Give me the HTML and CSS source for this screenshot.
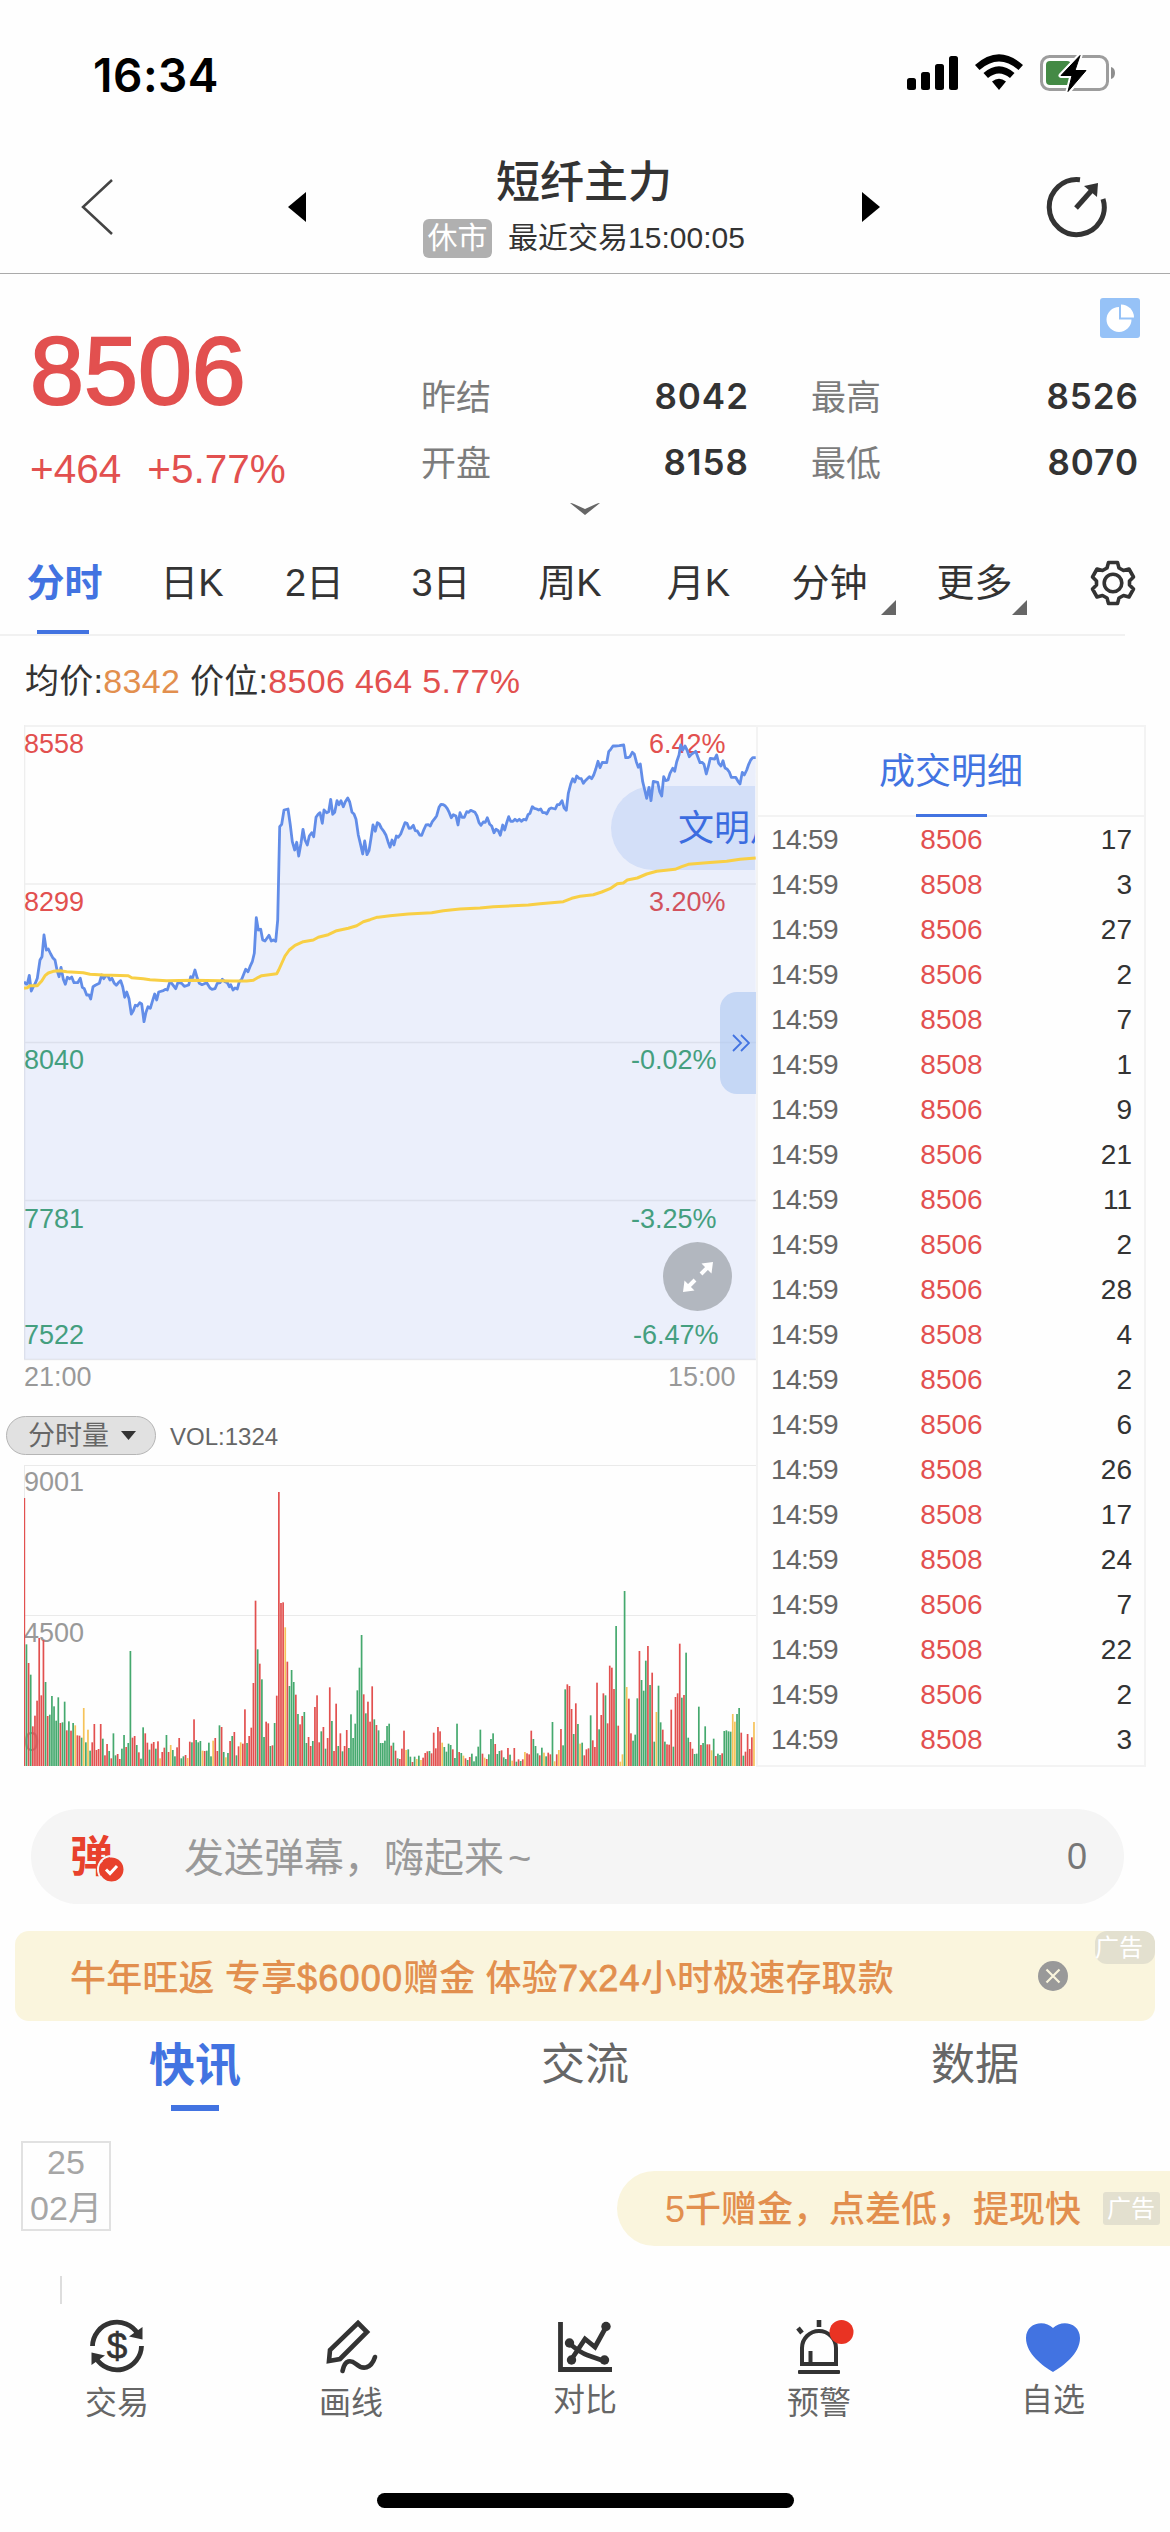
FILE: index.html
```
<!DOCTYPE html>
<html lang="zh-CN">
<head>
    <meta charset="UTF-8" />
    <title>短纤主力</title>
    <link rel="stylesheet" href="styles.css">
</head>
<body>
    <div id="wrap">
        <div class="status">
            <span class="time">16:34</span>
            <svg class="signal" width="212" height="42" viewBox="0 0 212 42">
                <rect x="1" y="25" width="9" height="12" rx="2.5"/>
                <rect x="15" y="19" width="9" height="18" rx="2.5"/>
                <rect x="29" y="11" width="9" height="26" rx="2.5"/>
                <rect x="43" y="3" width="9" height="34" rx="2.5"/>
                <path d="M69 12Q93 -9.500 117 12L112.500 17Q93 0 73.500 17Z"/>
                <path d="M77.500 20Q93 6.500 108.500 20L104 25Q93 16 82 25Z"/>
                <path d="M86 28.500Q93 23 100 28.500L93 37Z"/>
                <rect x="135.500" y="3.500" width="66" height="33" rx="8" fill="none" stroke="#9d9d9d" stroke-width="3"/>
                <rect x="140" y="8" width="25" height="24" rx="4" fill="#448a45"/>
                <path d="M205 14q4 1 4 6t-4 6z" fill="#8e8e8e"/>
                <path d="M174 2.500L155 22.500H166L162 38.500L180 17.500H169Z" stroke="#fff" stroke-width="5" stroke-linejoin="round"/>
                <path d="M174 2.500L155 22.500H166L162 38.500L180 17.500H169Z" stroke="#000" stroke-width="1" stroke-linejoin="round"/>
            </svg>
        </div>
        <header>
            <svg class="back" width="34" height="58" viewBox="0 0 34 58"><path d="M32 2L3 29L32 56"/></svg>
            <svg class="arrow" width="18" height="30"><path d="M18 0V30L0 15Z"/></svg>
            <div class="title">
                <h1>短纤主力</h1>
                <p><em>休市</em>最近交易15:00:05</p>
            </div>
            <svg class="arrow" width="18" height="30"><path d="M0 0V30L18 15Z"/></svg>
            <svg class="share" width="62" height="62" viewBox="0 0 62 62">
                <path d="M34 3.800A27.500 27.500 0 1 0 57 23" fill="none" stroke="#333" stroke-width="5"/>
                <path d="M30 32L46 14" stroke="#333" stroke-width="5"/>
                <path d="M38 10L52 7L51 21Z" fill="#333"/>
            </svg>
        </header>

        <section class="quote">
            <div class="price">
                <strong>8506</strong>
                <p><span>+464</span><span>+5.77%</span></p>
            </div>
            <dl>
                <dt>昨结</dt><dd>8042</dd><dt>最高</dt><dd>8526</dd>
                <dt>开盘</dt><dd>8158</dd><dt>最低</dt><dd>8070</dd>
            </dl>
            <svg class="pie" width="40" height="40" viewBox="0 0 40 40">
                <rect width="40" height="40" rx="3" fill="#96c2f7"/>
                <path d="M19 9A12.500 12.500 0 1 0 31.500 21.500H19Z" fill="#fff"/>
                <path d="M21 6.500A13 13 0 0 1 34 19.500H21Z" fill="#fff"/>
            </svg>
            <svg class="more" width="30" height="12" viewBox="0 0 30 12"><path d="M0 0Q2 0 4 1L15 6L26 1Q28 0 30 0L15 12Z" fill="#666"/></svg>
        </section>

        <ul class="periods">
            <li class="active">分时</li>
            <li>日K</li>
            <li>2日</li>
            <li>3日</li>
            <li>周K</li>
            <li>月K</li>
            <li class="drop">分钟</li>
            <li class="drop">更多</li>
            <li>
                <svg width="46" height="46" viewBox="0 0 46 46" fill="none" stroke="#333" stroke-width="3.600" stroke-linejoin="round">
                    <path d="M18.500 2.500H27.500L29 8L33.500 10.500L39 9L43.500 17L39.500 21V25L43.500 29L39 37L33.500 35.500L29 38L27.500 43.500H18.500L17 38L12.500 35.500L7 37L2.500 29L6.500 25V21L2.500 17L7 9L12.500 10.500L17 8Z"/>
                    <circle cx="23" cy="23" r="8.800"/>
                </svg>
            </li>
        </ul>

        <p class="info">均价:<i class="orange">8342</i> 价位:<i>8506 464 5.77%</i></p>

        <div class="main">
            <div class="charts">
                <div class="kline">
                    <div class="danmu">文明用语</div>
                    <svg id="trend" width="732" height="680" viewBox="0 0 732 680">
                        <g class="grid">
                            <path d="M0 1H732M0 159H732M0 317.500H732M0 475.500H732M0 634.500H732M.5 0V635"/>
                        </g>
                        <g class="up">
                            <text x="0" y="28">8558</text><text x="0" y="186">8299</text>
                            <text x="625" y="28">6.42%</text><text x="625" y="186">3.20%</text>
                        </g>
                        <g class="down">
                            <text x="0" y="344">8040</text><text x="0" y="503">7781</text><text x="0" y="619">7522</text>
                            <text x="607" y="344">-0.02%</text><text x="607" y="503">-3.25%</text><text x="609" y="619">-6.47%</text>
                        </g>
                        <g class="axis">
                            <text x="0" y="661">21:00</text><text x="644" y="661">15:00</text>
                        </g>
                    </svg>
                    <div class="fold">
                        <svg width="18" height="18" viewBox="0 0 18 18"><path d="M1 1L9 9L1 17M9 1L17 9L9 17"/></svg>
                    </div>
                    <div class="full">
                        <svg width="34" height="34" viewBox="0 0 34 34">
                            <path d="M20 14L27 7M14 20L7 27" stroke="#fff" stroke-width="4"/>
                            <path d="M20.500 3.500L32 2L30.500 13.500ZM3.500 20.500L2 32L13.500 30.500Z" fill="#fff"/>
                        </svg>
                    </div>
                </div>
                <div class="tool">
                    <span class="select">分时量<svg width="15" height="10"><path d="M0 0H15L7.500 9Z" fill="#333"/></svg></span>
                    <span class="vol">VOL:1324</span>
                </div>
                <svg id="volume" width="732" height="302" viewBox="0 0 732 302">
                    <path class="line" d="M0 .5H732M0 150.500H732M.5 0V301"/>
                    <g class="axis">
                        <text x="0" y="26">9001</text><text x="0" y="177">4500</text><text x="0" y="286">0</text>
                    </g>
                </svg>
            </div>
            <div class="detail">
                <h2>成交明细</h2>
                <ul id="list"></ul>
            </div>
        </div>

        <div class="send">
            <div class="logo">弹<svg width="25" height="25" viewBox="0 0 25 25"><circle cx="12.500" cy="12.500" r="12" fill="#e8412c"/><path d="M7 12.500L11 16.500L18 9" fill="none" stroke="#fff" stroke-width="3"/></svg></div>
            <span class="hint">发送弹幕，嗨起来<i>~</i></span>
            <span class="count">0</span>
        </div>

        <div class="ad">
            <span>牛年旺返 专享<b>$6000</b>赠金 体验<b>7x24</b>小时极速存取款</span>
            <svg width="30" height="30" viewBox="0 0 30 30"><circle cx="15" cy="15" r="15" fill="#999"/><path d="M8.500 8.500L21.500 21.500M21.500 8.500L8.500 21.500" stroke="#faf5dd" stroke-width="2.200"/></svg>
            <em>广告</em>
        </div>

        <nav class="tabs">
            <a class="active">快讯</a>
            <a>交流</a>
            <a>数据</a>
        </nav>

        <div class="news">
            <div class="date"><span>25</span><span>02月</span></div>
            <div class="gift"><span>5千赠金，点差低，提现快</span><em>广告</em></div>
        </div>
        <div class="stem"></div>

        <footer>
            <a>
                <svg width="56" height="56" viewBox="0 0 56 56">
                    <path d="M3.500 28A24.500 24.500 0 0 1 49 16M52.500 28A24.500 24.500 0 0 1 7 40" fill="none" stroke="#333" stroke-width="4.800"/>
                    <path d="M40 18.500L53.500 9V21.500ZM16 37.500L2.500 47V34.500Z" fill="#333"/>
                    <text x="28" y="41" class="dollar">$</text>
                </svg>
                交易
            </a>
            <a>
                <svg width="56" height="56" viewBox="0 0 56 56" fill="none" stroke="#333" stroke-width="4.600">
                    <path d="M35 5L44 14L17 41L6 43L7 32Z"/>
                    <path d="M19.500 53C22 41 28 42 33 46C40 52 48 51 52 39" stroke-linecap="round"/>
                </svg>
                画线
            </a>
            <a class="lift">
                <svg width="56" height="56" viewBox="0 0 56 56">
                    <path d="M3.500 4V51.500H55" fill="none" stroke="#333" stroke-width="4.800"/>
                    <path d="M14 42L28 21L38 29L49 9M13 26Q24 35 30 37L47 43" fill="none" stroke="#333" stroke-width="4.800"/>
                    <g fill="#333"><circle cx="49" cy="8.500" r="4.700"/><circle cx="12.500" cy="25" r="4.700"/><circle cx="14.500" cy="42" r="4.700"/><circle cx="47.500" cy="42" r="4.700"/></g>
                </svg>
                对比
            </a>
            <a>
                <svg width="56" height="56" viewBox="0 0 56 56" overflow="visible">
                    <path d="M11 46V30A17 17 0 0 1 45 30V46Z" fill="none" stroke="#333" stroke-width="4"/>
                    <path d="M19.500 46V33" stroke="#333" stroke-width="4"/>
                    <path d="M28 2V9M7 10L11 15" stroke="#333" stroke-width="4.600"/>
                    <rect x="7" y="52" width="42" height="4" rx="1" fill="#333"/>
                    <circle cx="50.500" cy="14" r="12" fill="#e93323"/>
                </svg>
                预警
            </a>
            <a class="lift">
                <svg width="56" height="56" viewBox="0 0 56 56"><path d="M28 54C18 48 1 36 1 20C1 5 19 1 28 10C37 1 55 5 55 20C55 36 38 48 28 54Z" fill="#4273e1"/></svg>
                自选
            </a>
        </footer>
        <div class="home"></div>
    </div>
    <script src="script.js"></script>
</body>
</html>
```
FILE: styles.css
```
*{
    box-sizing: border-box;
    margin: 0;
    padding: 0;
}
body{
    background: #fefefe;
    color: #333;
    font-family: "Liberation Sans","Noto Sans CJK SC",sans-serif;
}
#wrap{
    width: 1170px;
    height: 2532px;
    overflow: hidden;
}
ul{
    list-style: none;
}
i,em{
    font-style: normal;
}
svg{
    display: block;
    flex: none;
}
.status{
    display: flex;
    justify-content: space-between;
    height: 140px;
    padding: 54px 52px 0 93px;
}
.time{
    font: 600 46px/42px Inter,sans-serif;
    letter-spacing: .5px;
    color: #000;
}
.signal{
    margin: -1px 0 0;
}
header{
    display: flex;
    align-items: center;
    height: 134px;
    padding: 0 62px 0 80px;
    border-bottom: 1px solid #aaa;
}
.back path{
    fill: none;
    stroke: #444;
    stroke-width: 2.5;
}
.back{
    margin-right: 174px;
}
.title{
    width: 558px;
    text-align: center;
}
h1{
    font-size: 44px;
    font-weight: 500;
    line-height: 60px;
    margin-top: -2px;
}
.title p{
    display: flex;
    justify-content: center;
    align-items: center;
    margin-top: 5px;
    font-size: 30px;
    line-height: 40px;
}
.title em{
    width: 69px;
    height: 39px;
    line-height: 38px;
    margin-right: 16px;
    border-radius: 6px;
    background: #b0b0b0;
    color: #fff;
}
.share{
    margin-left: 166px;
}
.quote{
    display: flex;
    position: relative;
    height: 256px;
    padding: 52px 31px 0 30px;
    color: #e2504f;
}
.price{
    width: 391px;
}
.price strong{
    display: block;
    font-weight: 400;
    font-size: 97px;
    line-height: 90px;
    -webkit-text-stroke: 2px #e2504f;
}
.price p{
    display: flex;
    gap: 26px;
    margin-top: 30px;
    font-size: 40.5px;
    line-height: 46px;
}
dl{
    display: grid;
    flex: 1;
    grid-template-columns: 90px 238px 152px 1fr;
    grid-auto-rows: 66px;
    align-items: center;
    padding-top: 37px;
}
dt{
    margin-top: -4px;
    font-size: 35px;
    color: #7c7c7c;
}
dt:nth-of-type(even){
    padding-left: 62px;
}
dd{
    font: 600 35px/40px Inter,sans-serif;
    letter-spacing: 1px;
    text-align: right;
    color: #333;
}
.pie{
    position: absolute;
    left: 1100px;
    top: 24px;
}
.more{
    position: absolute;
    left: 570px;
    top: 229px;
}
.periods{
    display: grid;
    grid-template-columns: 129px 126px 119px 134px 124px 133px 129px 161px 115px;
    position: relative;
    width: 1170px;
    height: 106px;
    font-size: 38px;
    line-height: 106px;
    text-align: center;
}
.periods:after{
    content: "";
    position: absolute;
    left: 0;
    bottom: 0;
    width: 1125px;
    height: 2px;
    background: #f1f1f1;
}
.periods li{
    display: flex;
    justify-content: center;
    align-items: center;
    position: relative;
}
.periods .active{
    color: #4273e1;
    font-weight: 700;
}
.periods .active:after{
    content: "";
    position: absolute;
    left: 37px;
    bottom: 2px;
    width: 52px;
    height: 4px;
    background: #4273e1;
}
.drop:after{
    content: "";
    position: absolute;
    right: -2px;
    bottom: 21px;
    border-left: 15px solid transparent;
    border-bottom: 15px solid #666;
}
.drop + .drop:after{
    right: 28px;
}
.info{
    height: 89px;
    padding: 20px 25px 0;
    font-size: 34px;
    line-height: 50px;
    letter-spacing: .3px;
}
.info i{
    color: #e2504f;
}
.info .orange{
    color: #e28f4e;
}
.main{
    display: flex;
    height: 1042px;
    margin: 0 24px 0 24px;
}
.charts{
    width: 732px;
}
.kline{
    position: relative;
    height: 691px;
    overflow: hidden;
}
.danmu{
    position: absolute;
    left: 587px;
    top: 61px;
    width: 144px;
    height: 84px;
    padding-left: 67px;
    border-radius: 42px 0 0 42px;
    background: #e4ecfb;
    color: #3a6de0;
    font-size: 36px;
    line-height: 86px;
    white-space: nowrap;
    overflow: hidden;
}
#trend{
    position: relative;
}
text{
    font-size: 27px;
}
.grid path{
    fill: none;
    stroke: #eee;
    stroke-width: 1.6;
}
.up{
    fill: #e2504f;
}
.down{
    fill: #45a574;
}
.axis{
    fill: #999;
}
.area{
    fill: rgba(65,112,224,.1);
}
.now{
    fill: none;
    stroke: #628de8;
    stroke-width: 2.8;
    stroke-linejoin: round;
}
.avg{
    fill: none;
    stroke: #f8cf45;
    stroke-width: 3;
    stroke-linejoin: round;
}
.fold{
    display: flex;
    align-items: center;
    position: absolute;
    left: 696px;
    top: 267px;
    width: 36px;
    height: 102px;
    padding-left: 12px;
    border-radius: 17px 0 0 17px;
    background: rgba(172,198,242,.6);
}
.fold path{
    fill: none;
    stroke: #4273e1;
    stroke-width: 1.8;
}
.full{
    display: flex;
    justify-content: center;
    align-items: center;
    position: absolute;
    left: 639px;
    top: 517px;
    width: 69px;
    height: 69px;
    border-radius: 50%;
    background: #b2b7bf;
}
.tool{
    display: flex;
    align-items: center;
    height: 39px;
    margin: 0 0 10px -18px;
    color: #666;
}
.select{
    display: flex;
    align-items: center;
    gap: 12px;
    width: 150px;
    height: 39px;
    padding-left: 21px;
    border: 1px solid #b5b5b5;
    border-radius: 20px;
    background: #e1e1e1;
    font-size: 27px;
    line-height: 36px;
}
.vol{
    margin: 3px 0 0 14px;
    font-size: 24px;
}
.line{
    fill: none;
    stroke: #eaeaea;
}
.r{
    fill: #e2504f;
}
.g{
    fill: #45a96e;
}
.y{
    fill: #f6c35a;
}
.detail{
    width: 391px;
    border: 2px solid #f3f3f3;
}
h2{
    position: relative;
    height: 90px;
    border-bottom: 2px solid #f3f3f3;
    color: #4273e1;
    font-size: 36px;
    font-weight: 400;
    line-height: 90px;
    text-align: center;
}
h2:after{
    content: "";
    position: absolute;
    left: 158px;
    bottom: -2px;
    width: 71px;
    height: 3px;
    background: #4273e1;
}
#list li{
    display: grid;
    grid-template-columns: 120px 1fr 120px;
    height: 45px;
    padding: 0 12px 0 13px;
    font-size: 28px;
    line-height: 45px;
}
#list span{
    color: #666;
    letter-spacing: -.6px;
}
#list i{
    color: #e2504f;
    text-align: center;
}
#list b{
    font-weight: 400;
    text-align: right;
}
.send{
    display: flex;
    align-items: center;
    width: 1093px;
    height: 95px;
    margin: 42px 0 27px 31px;
    padding: 0 37px 0 39px;
    border-radius: 48px;
    background: #f5f5f5;
}
.logo{
    position: relative;
    width: 114px;
    color: #e8412c;
    font-size: 43px;
    font-weight: 700;
    line-height: 56px;
}
.logo svg{
    position: absolute;
    left: 29px;
    top: 28px;
    border-radius: 50%;
    box-shadow: 0 0 0 2px #f5f5f5;
}
.hint{
    flex: 1;
    margin-top: -3px;
    color: #999;
    font-size: 40px;
}
.hint i{
    margin-left: 4px;
}
.count{
    color: #777;
    font-size: 36px;
}
.ad{
    display: flex;
    justify-content: space-between;
    align-items: center;
    position: relative;
    height: 90px;
    margin: 0 15px;
    padding: 0 87px 3px 55px;
    border-radius: 14px;
    background: #faf5dd;
    color: #e28f4e;
    font-size: 36px;
    font-weight: 500;
    letter-spacing: .15px;
}
.ad svg{
    margin-top: 3px;
}
.ad b{
    font-weight: 400;
    letter-spacing: 1.2px;
    -webkit-text-stroke: .8px #e28f4e;
}
.ad em,.gift em{
    background: #e3e0cf;
    color: #fff;
    font-size: 24px;
    font-weight: 400;
    line-height: 33px;
    letter-spacing: 0;
}
.ad em{
    position: absolute;
    right: 0;
    top: 0;
    width: 60px;
    height: 33px;
    border-radius: 12px;
}
.tabs{
    display: flex;
    height: 120px;
}
.tabs a{
    position: relative;
    width: 390px;
    color: #666;
    font-size: 44px;
    line-height: 88px;
    text-align: center;
}
.tabs .active{
    color: #4273e1;
    font-size: 46px;
    font-weight: 700;
}
.tabs .active:after{
    content: "";
    position: absolute;
    left: 171px;
    top: 84px;
    width: 48px;
    height: 6px;
    background: #4273e1;
}
.news{
    display: flex;
    justify-content: space-between;
    align-items: flex-start;
    height: 135px;
    padding-left: 21px;
}
.date{
    display: flex;
    flex-direction: column;
    width: 90px;
    height: 90px;
    border: 2px solid #e1e1e1;
    color: #a6a6a6;
    font-size: 34px;
    line-height: 38px;
    text-align: center;
}
.date span:last-child{
    line-height: 54px;
}
.gift{
    display: flex;
    align-items: center;
    width: 553px;
    height: 75px;
    margin-top: 30px;
    padding-left: 48px;
    border-radius: 38px 0 0 38px;
    background: #faf5dd;
    color: #e28f4e;
    font-size: 36px;
    font-weight: 500;
    white-space: nowrap;
}
.gift span{
    margin-top: -5px;
}
.gift em{
    width: 57px;
    margin-left: 22px;
    padding-left: 4px;
    border-radius: 3px;
}
.stem{
    width: 2px;
    height: 28px;
    margin-left: 60px;
    background: #ddd;
}
footer{
    display: flex;
    height: 188px;
    padding-top: 14px;
}
footer a{
    display: flex;
    flex-direction: column;
    align-items: center;
    width: 234px;
    color: #666;
    font-size: 32px;
    line-height: 44px;
}
footer svg{
    margin-bottom: 7px;
}
.lift svg{
    margin-bottom: 4px;
}
.dollar{
    fill: #333;
    stroke: #333;
    stroke-width: .6;
    font-size: 37px;
    text-anchor: middle;
}
.home{
    width: 417px;
    height: 15px;
    margin: 1px auto 0;
    border-radius: 8px;
    background: #000;
}
```
FILE: script.js
```
var NS = 'http://www.w3.org/2000/svg';
var trend = document.querySelector('#trend');
var volume = document.querySelector('#volume');
var list = document.querySelector('#list');

// 夜盘、日盘的价格点，单位是 1/3 像素
var night = '0,770 6,777 10,777 16,751 22,798 28,785 34,775 40,760 48,705 54,695 60,630 67,675 73,672 80,687 86,698 93,705 99,735 105,755 111,727 118,763 124,778 130,757 137,761 143,756 150,773 161,773 169,760 175,787 181,791 188,810 195,810 200,822 207,785 214,781 226,775 233,750 239,761 246,752 252,753 258,765 264,760 271,775 277,781 284,772 290,767 296,785 302,817 308,801 315,821 322,867 328,857 334,841 340,843 347,833 353,837 360,890 366,862 372,845 379,850 385,830 392,807 398,825 404,801 418,797 424,793 430,795 437,772 443,775 455,791 462,772 473,775 481,784 494,780 500,755 506,758 513,735 520,760 526,775 534,779 548,773 558,789 564,793 573,791 580,775 588,773 595,763 603,770 610,773 616,785 620,779 627,795 633,789 640,792 646,770 653,763 665,733 672,740 678,725 685,710 691,685 697,578 703,615 710,613 716,645 723,648 735,631 742,648 748,645 755,649 761,585 767,305 773,298 780,255 792,252 799,300 805,350 812,375 818,352 824,393 831,355 837,313 843,345 850,360 856,333 863,323 869,335 876,277 883,267 888,263 895,295 900,255 908,263 914,260 920,223 926,268 932,262 939,227 945,239 951,227 958,245 964,230 971,219 977,231 984,262 990,267 996,283 1003,330 1009,355 1016,387 1022,348 1029,389 1035,377 1041,340 1047,300 1054,319 1060,293';
var day = '-2,297 4,309 12,320 18,331 24,350 30,367 36,345 42,360 49,333 55,337 62,327 75,293 81,295 87,310 93,309 100,301 106,317 112,318 119,330 125,331 132,313 138,300 145,299 151,303 157,290 164,281 170,272 177,247 183,238 190,239 196,243 202,251 208,263 214,278 220,269 228,273 234,300 240,263 246,277 253,277 260,260 266,262 272,256 285,262 291,273 297,293 303,301 310,291 316,292 322,278 329,298 335,303 342,323 348,313 355,317 361,331 368,300 374,315 380,293 386,275 392,289 399,289 405,283 412,288 418,283 424,289 431,283 438,285 444,269 450,265 457,245 463,250 470,252 476,255 482,252 488,263 495,263 500,267 508,252 514,249 526,252 532,239 538,239 546,227 552,248 559,256 565,205 572,177 578,161 584,171 590,153 597,160 604,161 610,175 616,167 628,155 635,161 641,150 647,133 654,109 660,128 667,112 680,113 686,80 692,73 699,63 706,63 718,62 731,60 737,98 743,98 750,95 757,82 763,87 769,110 775,127 781,117 788,170 794,195 800,220 807,187 813,227 820,169 833,172 839,200 845,213 851,155 857,167 864,165 870,145 878,130 884,139 890,110 897,90 902,60 908,75 915,63 921,75 928,95 934,88 947,79 953,95 960,113 966,112 972,118 979,147 985,125 991,100 1004,102 1010,90 1016,115 1023,123 1029,107 1035,129 1042,133 1048,141 1054,157 1067,157 1074,169 1080,177 1087,142 1093,150 1100,135 1106,118 1112,105 1118,98 1127,98';
// 均价线
var avgNight = '0,790 10,788 18,782 40,782 53,768 63,752 73,744 88,739 108,737 128,740 178,743 198,748 238,750 313,752 323,758 358,761 378,764 428,767 508,766 628,768 668,768 688,766 703,757 713,752 758,746 764,735 783,693 796,675 813,661 838,650 868,645 883,637 913,629 938,617 973,610 998,602 1018,590 1038,584 1058,577';
var avgDay = '-5,577 30,572 85,567 155,563 190,557 240,552 300,549 340,545 445,540 480,536 550,530 575,520 600,514 640,509 665,501 690,491 712,476 730,474 742,465 772,459 800,447 830,439 885,433 905,425 925,418 980,413 1040,409 1080,403 1127,399';
// 每分钟成交量：r涨 g跌 y平
var vols = 'r804 g365 r309 g274 r119 r151 r196 r384 r212 r378 g252 r150 g154 g210 g179 g136 g206 r129 g131 g193 r107 g134 r106 g129 y122 r92 r91 g85 y174 g71 y109 g46 r71 r126 r48 r51 r126 g82 r32 r66 g45 r23 g98 g32 r36 r21 g52 g93 r57 g69 g345 r85 r90 g63 r41 g22 g116 r98 r70 g49 r67 r72 g52 r74 y23 r42 r55 g93 r42 y63 g48 g29 r56 r84 g23 g29 r33 y24 r73 g71 r140 g78 g71 g75 y46 r45 g46 g70 g29 y76 r84 r45 g122 r117 g42 y26 g39 r75 g90 r102 g32 r59 y71 r67 r170 g69 r90 r115 r249 r496 g350 r307 g260 g87 r133 r128 g60 r62 g129 r211 r822 r489 r491 y416 r313 g240 g288 g252 r214 g156 r125 r150 g162 g69 r87 r60 g75 r177 r212 r71 g104 r117 g52 r84 r236 g135 r45 r187 g60 r98 g44 r60 r108 g54 g155 g84 g127 g227 g295 g393 r215 g158 r193 r133 r239 g140 r123 g107 g69 g69 g76 g120 g127 r61 g70 r46 g23 r21 r52 r106 y48 g50 g28 r12 g28 y21 g31 y18 r25 r39 r44 g45 r38 r100 r53 r117 r104 y70 g57 g43 g67 g63 r50 g24 g127 r42 g39 y31 r23 g18 r27 g37 g14 g29 g58 g109 r37 y25 r21 g35 g81 g98 r66 g36 g45 r47 g26 g21 r54 g34 y16 r54 g13 r20 g15 r20 y42 r38 r35 r106 g81 g60 g38 r32 g55 y40 g29 r40 r35 g132 y14 r35 y48 r111 g62 g230 r245 r240 r171 g96 r188 g126 y67 g70 r32 r50 r53 g152 r77 r57 r250 g110 r153 r218 g212 r128 r301 r295 r231 g420 r121 y13 y35 g525 y237 r202 r98 g76 g94 g203 r345 g258 g226 g316 r360 g243 r280 g73 y162 g241 g131 r109 g73 r65 r64 r169 g58 r207 r218 r367 g205 r213 g340 g85 r72 r52 g36 g37 g178 r63 g69 g119 r65 r65 y47 g82 r30 g37 g33 r38 g105 g107 g104 g103 y156 y133 g156 g174 r100 g31 r43 r96 r51 r86 y132';
// 成交明细：价格,手数
var deals = [
    [8506,17],[8508,3],[8506,27],[8506,2],[8508,7],[8508,1],[8506,9],
    [8506,21],[8506,11],[8506,2],[8506,28],[8508,4],[8506,2],[8506,6],
    [8508,26],[8508,17],[8508,24],[8506,7],[8508,22],[8506,2],[8508,3]
];

function points(str, left){
    return str.split(' ').map(function (s){
        var p = s.split(',');
        return [(p[0] / 3 + left).toFixed(1), (p[1] / 3).toFixed(1)];
    });
}
function add(parent, tag, attrs){
    var el = document.createElementNS(NS, tag);
    for(var k in attrs) el.setAttribute(k, attrs[k]);
    parent.appendChild(el);
}

var now = 'M' + points(night, 0).concat(points(day, 356)).join('L');
var avg = 'M' + points(avgNight, 0).concat(points(avgDay, 356)).join('L');
add(trend, 'path', {'class': 'area', d: now + 'V634.500H0Z'});
add(trend, 'path', {'class': 'now', d: now});
add(trend, 'path', {'class': 'avg', d: avg});

vols.split(' ').forEach(function (v, i){
    var h = v.slice(1) / 3;
    add(volume, 'rect', {
        'class': v.charAt(0),
        x: (i * 2.121 - .5).toFixed(2),
        y: (301 - h).toFixed(2),
        width: 1.7,
        height: h.toFixed(2)
    });
});

list.innerHTML = deals.map(function (d){
    return '<li><span>14:59</span><i>' + d[0] + '</i><b>' + d[1] + '</b></li>';
}).join('');
```
